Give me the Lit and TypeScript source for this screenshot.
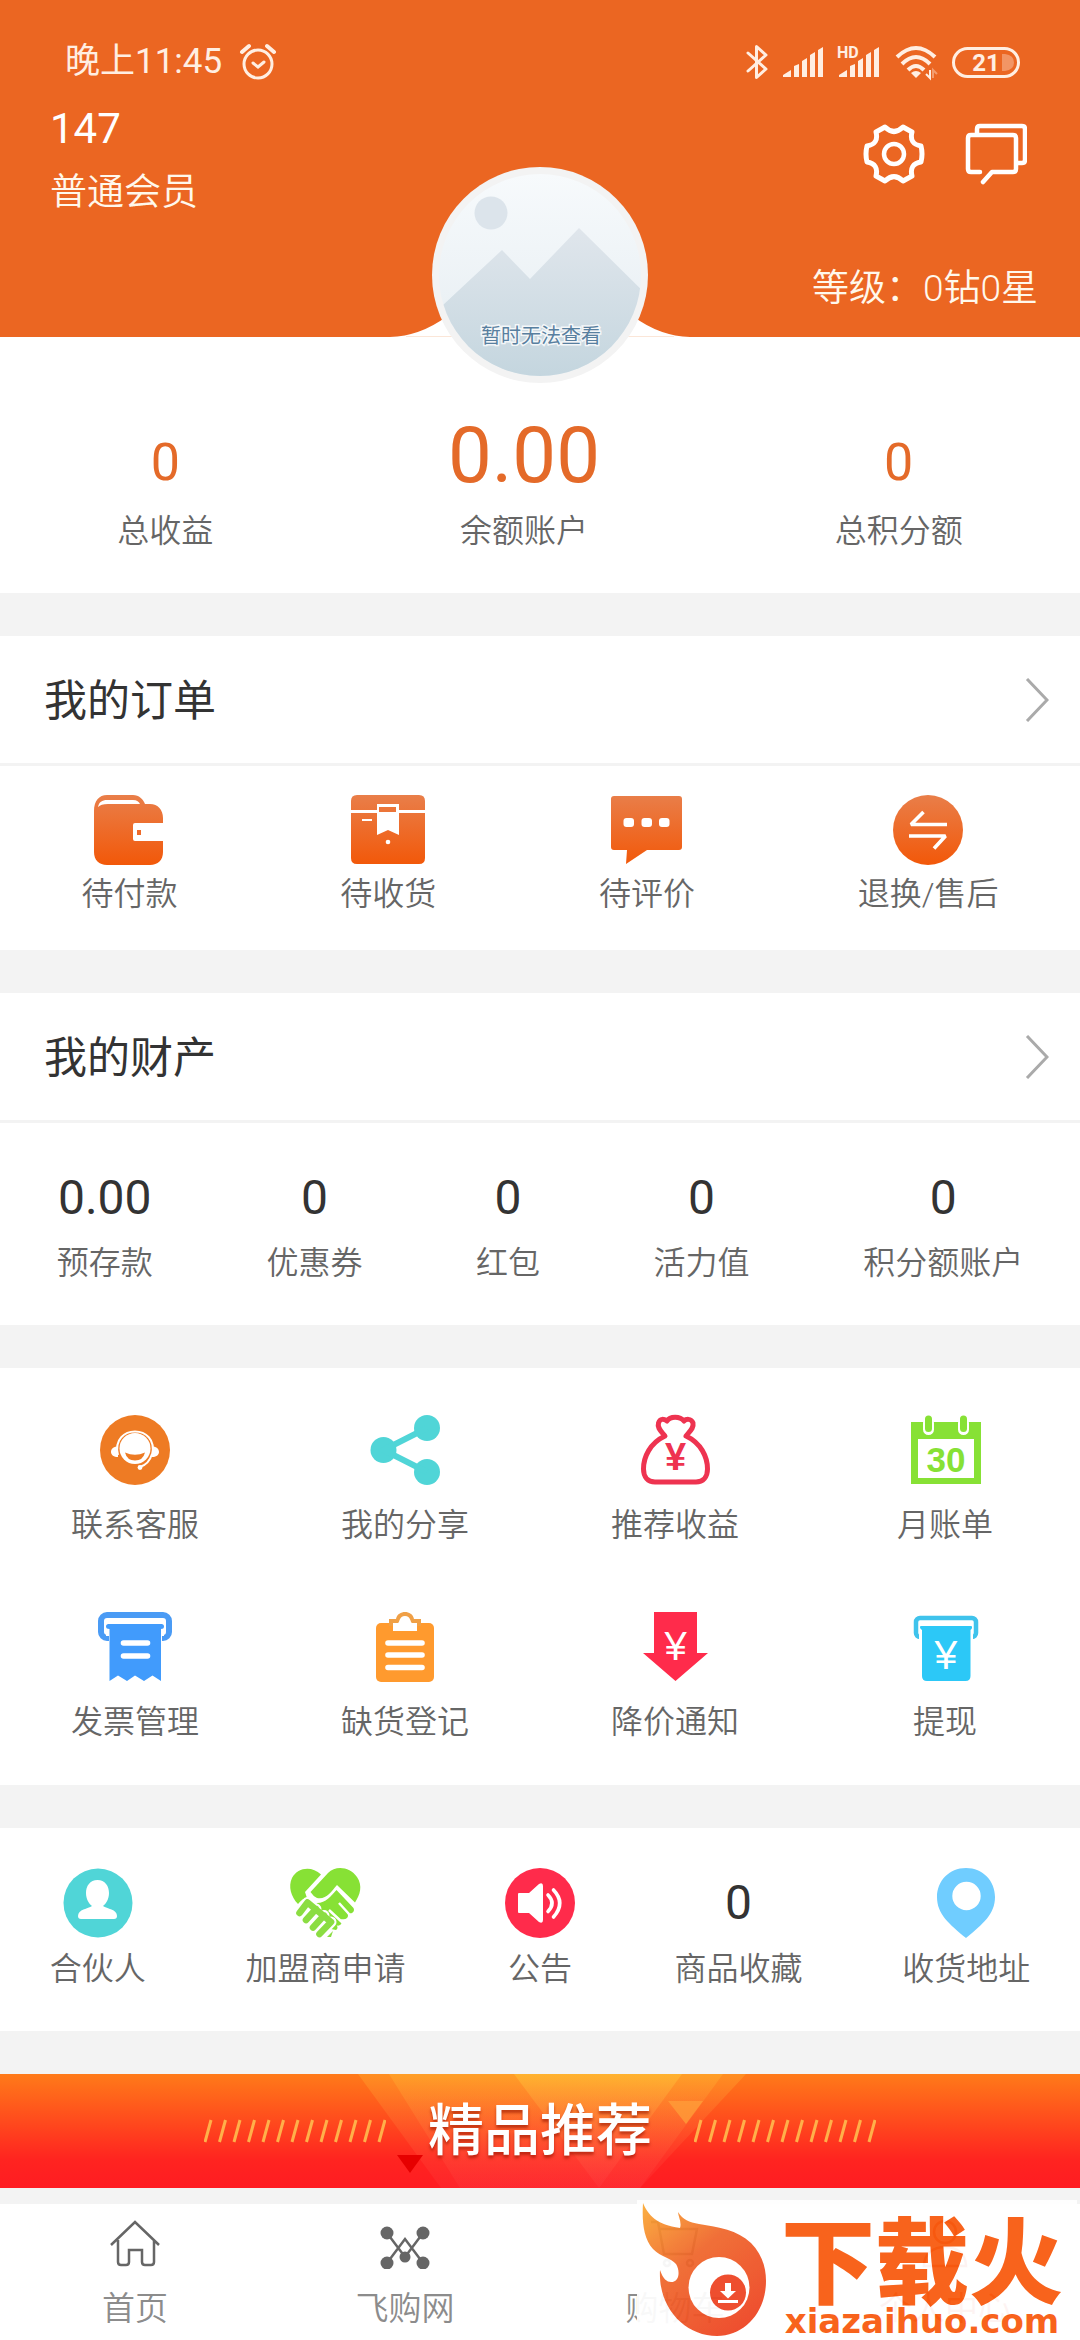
import { LitElement, html, svg, css, SVGTemplateResult } from "lit";
import { customElement, property } from "lit/decorators.js";

type Entry = { label: string; icon?: string; value?: string };

const ORDERS: Entry[] = [
  { label: "待付款", icon: "wallet" },
  { label: "待收货", icon: "parcel" },
  { label: "待评价", icon: "comment" },
  { label: "退换/售后", icon: "exchange" },
];

const ASSETS: Entry[] = [
  { label: "预存款", value: "0.00" },
  { label: "优惠券", value: "0" },
  { label: "红包", value: "0" },
  { label: "活力值", value: "0" },
  { label: "积分额账户", value: "0" },
];

const TOOLS: Entry[] = [
  { label: "联系客服", icon: "service" },
  { label: "我的分享", icon: "share" },
  { label: "推荐收益", icon: "bag" },
  { label: "月账单", icon: "calendar" },
  { label: "发票管理", icon: "receipt" },
  { label: "缺货登记", icon: "clipboard" },
  { label: "降价通知", icon: "drop" },
  { label: "提现", icon: "cash" },
];

const EXTRAS: Entry[] = [
  { label: "合伙人", icon: "partner" },
  { label: "加盟商申请", icon: "alliance" },
  { label: "公告", icon: "notice" },
  { label: "商品收藏", value: "0" },
  { label: "收货地址", icon: "pin" },
];

const warm = svg`<defs><linearGradient id="warm" gradientUnits="userSpaceOnUse" x1="0" y1="0" x2="0" y2="70">
  <stop offset="0" stop-color="#e97e49"/><stop offset="1" stop-color="#f25809"/></linearGradient></defs>`;

/* Every glyph is drawn on a 70 by 70 board; a few reach slightly past its sides. */
const ICONS: Record<string, SVGTemplateResult> = {
  wallet: svg`${warm}
    <path fill="url(#warm)" d="M0 16C0 6 5 0 13 0H39C45 0 49 4 51 9H56C64 9 69 15 69 23V28H41Q39 28 39 30V44Q39 46 41 46H69V57C69 65 64 70 56 70H13C5 70 0 65 0 57Z"/>
    <path fill="#fff" d="M4 12C5 7 8 5 13 5H39C43 5 45 7 46 9H14C9 9 6 10 4 12Z"/>
    <rect x="43" y="35" width="4" height="5" fill="#ee6a2a"/>`,
  parcel: svg`${warm}
    <path fill="url(#warm)" d="M-2 15V6Q-2 0 4 0H66Q72 0 72 6V15ZM-2 18H72V63Q72 69 66 69H4Q-2 69 -2 63Z"/>
    <path fill="#fff" d="M24 9H46V40L35 35 24 40Z"/>
    <rect x="26" y="12" width="17" height="5" fill="#ec7539"/>
    <path stroke="#fff" stroke-width="2" d="M9 25H19"/><circle cx="35" cy="47" r="2.3" fill="#fff"/>`,
  comment: svg`${warm}
    <path fill="url(#warm)" d="M2 1H67Q70 1 70 4V52Q70 55 67 55H35L14 69 15 55H2Q-1 55 -1 52V4Q-1 1 2 1Z"/>
    <g fill="#fff"><rect x="11.5" y="23" width="10.5" height="9" rx="3"/><rect x="29.5" y="23" width="10.5" height="9" rx="3"/><rect x="47" y="23" width="10.5" height="9" rx="3"/></g>`,
  exchange: svg`${warm}
    <circle cx="35" cy="35" r="35" fill="url(#warm)"/>
    <path fill="none" stroke="#fff" stroke-width="3.6" stroke-linejoin="bevel" d="M54 29.5H18L30.5 17M16 41H52.5L41 53.5"/>`,
  service: svg`<circle cx="35" cy="35" r="35" fill="#ee7b24"/>
    <circle cx="35" cy="33.5" r="15.5" fill="#fff"/>
    <g fill="none" stroke="#fff" stroke-width="2"><path d="M18 40C14 24 25 16.5 35 16.5S56 24 52 40"/><path d="M52 39C50 46 46 50 40 52"/></g>
    <path fill="#fff" d="M18 31C13 32 11 34 11 37S14 42 18 42ZM52 31C57 32 59 34 59 37S56 42 52 42Z"/>
    <circle cx="40" cy="52.5" r="2.4" fill="#fff"/>
    <path fill="#ee7b24" d="M25 37.5Q35 42 45 37.5Q43 45.5 35 45.5T25 37.5Z"/>`,
  share: svg`<g fill="#50d5d7"><circle cx="13.5" cy="35" r="13"/><circle cx="57" cy="13" r="13"/><circle cx="57" cy="57" r="13"/></g>
    <path fill="none" stroke="#50d5d7" stroke-width="6" d="M57 13 13.5 35 57 57"/>`,
  bag: svg`<path fill="none" stroke="#ee3350" stroke-width="5" stroke-linejoin="round" d="M25 21C10 28 3.5 42 3.5 54C3.5 62 8 67 15 67H56C63 67 67.5 62 67.5 54C67.5 42 61 28 46 21C50 16 54 13 53 8C51 3 46 4 44 6C40 1 30 1 27 6C24 4 20 3 18.5 8C17 13 21 16 25 21Z"/>
    <text x="35.5" y="55" text-anchor="middle" font-family="Liberation Sans" font-weight="700" font-size="38" fill="#ee3350">¥</text>`,
  calendar: svg`<path fill="#87e135" fill-rule="evenodd" d="M1 7H71V69H1ZM8 24V63H64V24Z"/>
    <g stroke-linecap="round"><path stroke="#fff" stroke-width="11" d="M18.5 8V14.5M53.5 8V14.5"/><path stroke="#87e135" stroke-width="7" d="M18.5 4V13.5M53.5 4V13.5"/></g>
    <text x="36" y="57" text-anchor="middle" font-family="Liberation Sans" font-weight="700" font-size="35" fill="#87e135">30</text>`,
  receipt: svg`<rect x="1" y="3" width="68" height="23" rx="6" fill="#fff" stroke="#4a9bf5" stroke-width="6"/>
    <path fill="#fff" d="M6 19H64V24H6ZM9 24H62V30H9Z"/>
    <path fill="#419bfc" d="M8.5 12H61.5Q64 12 64 14.5T61 17V69L52.5 63.5 44 69 35 63.5 27 69 18 63.5 9.5 69V17Q6 17 6 14.5T8.5 12Z"/>
    <path stroke="#fff" stroke-width="5.6" stroke-linecap="round" d="M23.5 31H47.5M23.5 44H47.5"/>`,
  clipboard: svg`<rect x="6" y="11" width="58" height="59" rx="5" fill="#ff9a2e"/>
    <path fill="#f0a046" d="M19 7H26C27 2 31 0 35 0S43 2 44 7H51V14H19Z"/>
    <path fill="#fff" d="M23 11H28C30 10 29 4 35 4S40 10 42 11H47V19H23Z"/>
    <path stroke="#fff" stroke-width="5.6" stroke-linecap="round" d="M18 31H52M18 43H52M18 55.5H52"/>`,
  drop: svg`<path fill="#ff2b4b" d="M14 0H57V41H68L35.5 69 3 41H14Z"/>
    <text x="35.5" y="48" text-anchor="middle" font-family="Liberation Sans" font-size="40" fill="#fff">¥</text>`,
  cash: svg`<rect x="6" y="6" width="60" height="19" rx="4" fill="#fff" stroke="#3fc3ec" stroke-width="4.5"/>
    <path fill="#fff" d="M9 20H63V30H9Z"/>
    <path fill="#2cc8f7" d="M10.5 14H61.5Q63 16 60.5 18V64Q60.5 69 55.5 69H17Q12 69 12 64V18Q9 16 10.5 14Z"/>
    <text x="36" y="57" text-anchor="middle" font-family="Liberation Sans" font-size="41" fill="#fff">¥</text>`,
  partner: svg`<circle cx="35" cy="35" r="34.5" fill="#50d5d7"/>
    <path fill="#fff" d="M34.5 12C42 12 46 18 46 25C46 31 43 36 40 38C44 41 54 41 54 48Q54 51 51 51H18Q15 51 15 48C15 41 25 41 29 38C26 36 23 31 23 25C23 18 27 12 34.5 12Z"/>`,
  alliance: svg`<g fill="#87e135">
      <path d="M31 6.5C22-2 8-1 2 10C-2 18 1 29 8 36C11 32 14 30 17 30L15 24Z"/>
      <path d="M20.5 24 38 5C46-3 60-1 67 9C73 18 70 27 65 34.5L47 17C41 24 36 32 27 30Q23 28 20.5 24Z"/>
      <path d="M27 35C36 35 41 28 46.5 22L63.5 40Q65 43 62 45Q60 46 57 44 59 48 57 50T51 51Q53 55 50 57T46 56Q49 60 46 62L41 61 25 41Z"/>
    </g>
    <path stroke="#fff" stroke-width="2.5" d="M49 35 59 46M39 42 53 55"/>
    <g fill="none" stroke-linecap="round"><path stroke="#fff" stroke-width="11" d="M17.5 34.5 9.5 45M26 41 16 52M34 47.5 23 59.5M41 54 29.5 66"/>
    <path stroke="#8bdd42" stroke-width="6.6" d="M17.5 34.5 9.5 45M26 41 16 52M34 47.5 23 59.5M41 54 29.5 66M17.5 34.5 41 54"/></g>
    <path fill="#8bdd42" d="M43 63 41 69H37Z"/>`,
  notice: svg`<circle cx="35" cy="35" r="35" fill="#ff2b4b"/>
    <path fill="#fff" d="M14 25H24L34 16Q38 14 38 18V52Q38 56 34 54L24 45H14Q13 45 13 44V26Q13 25 14 25Z"/>
    <path fill="none" stroke="#fff" stroke-width="3.6" stroke-linecap="round" d="M43 27Q51 35 43 43.5M48.5 22Q61 35 48.5 49"/>`,
  pin: svg`<path fill="#70cdff" fill-rule="evenodd" d="M35 0C52 0 64 13 64 29C64 46 52 56 35 70C18 56 6 46 6 29C6 13 18 0 35 0ZM35.5 13.8A14.2 14.2 0 1 0 35.5 42.2A14.2 14.2 0 1 0 35.5 13.8Z"/>`,
};

const TABS: { label: string; art: SVGTemplateResult; current?: boolean }[] = [
  {
    label: "首页",
    art: svg`<path d="M1 26 25 3 49 26M8 21V43Q8 46 11 46H16Q19 46 19 43V31H32V43Q32 46 35 46H41Q44 46 44 43V21"/>`,
  },
  {
    label: "飞购网",
    art: svg`<path d="M7 14 25 38 43 14M7 44 25 20 43 44"/><g fill="currentColor" stroke="none"><circle cx="7" cy="14" r="6.5"/><circle cx="43" cy="14" r="6.5"/><circle cx="7" cy="44" r="6.5"/><circle cx="43" cy="44" r="6.5"/><circle cx="25" cy="38" r="5.5"/></g>`,
  },
  {
    label: "购物车",
    art: svg`<path d="M1 3H8L14 35H42L47 10H10"/><circle cx="17" cy="44" r="3"/><circle cx="40" cy="44" r="3"/>`,
  },
  {
    label: "个人中心",
    current: true,
    art: svg`<circle cx="25" cy="13" r="11"/><path d="M4 47C4 34 14 28 25 28S46 34 46 47Z"/>`,
  },
];

const entryStyles = css`
  a {
    color: inherit;
    text-decoration: none;
  }
  .entry {
    display: flex;
    flex-direction: column;
    align-items: center;
    white-space: nowrap;
  }
  .icon {
    display: block;
    width: 70px;
    height: 70px;
    overflow: visible;
  }
  .value {
    color: #333;
    font-size: 48px;
    line-height: 60px;
  }
  .label {
    color: #666;
    font-size: 32px;
    font-weight: 350;
    line-height: 42px;
  }
`;

@customElement("entry-row")
class EntryRow extends LitElement {
  @property({ attribute: false }) entries: Entry[] = [];
  @property({ reflect: true }) kind = "orders";

  static styles = [
    entryStyles,
    css`
      :host {
        display: block;
      }
      .row {
        display: flex;
        justify-content: space-around;
      }
      .row.orders {
        padding: 29px 0 35px;
      }
      .row.orders .entry {
        gap: 8px;
      }
      .row.assets {
        padding: 45px 0 41px;
      }
      .row.assets .entry {
        gap: 14px;
      }
      .row.tools {
        display: grid;
        grid-template-columns: repeat(4, 1fr);
        row-gap: 66px;
        padding: 47px 0 42px;
      }
      .row.tools .entry {
        gap: 19px;
      }
      .row.extras {
        padding: 40px 0 41px;
      }
      .row.extras .entry {
        gap: 10px;
      }
      .row.extras .value {
        line-height: 70px;
      }
    `,
  ];

  render() {
    return html`<div class="row ${this.kind}">
      ${this.entries.map(
        (e) => html`<a class="entry" href="#">
          ${e.icon
            ? html`<svg class="icon" viewBox="0 0 70 70" aria-hidden="true">${ICONS[e.icon]}</svg>`
            : html`<span class="value">${e.value}</span>`}
          <span class="label">${e.label}</span>
        </a>`
      )}
    </div>`;
  }
}

@customElement("status-bar")
class StatusBar extends LitElement {
  static styles = css`
    :host {
      display: flex;
      align-items: center;
      justify-content: space-between;
      padding: 44px 60px 0 65px;
      color: #ffeee2;
    }
    .side {
      display: flex;
      align-items: center;
      gap: 15px;
      height: 36px;
    }
    .side.clock {
      gap: 18px;
    }
    .time {
      font-size: 35px;
      line-height: 38px;
    }
    svg {
      display: block;
      overflow: visible;
    }
  `;

  private bars(lead: SVGTemplateResult | string = "") {
    return html`<svg width="41" height="32" viewBox="0 0 41 32" fill="currentColor" aria-hidden="true">
      ${lead}
      <path d="M0 31V29L8 24V31ZM11 31V20L16 18V31ZM19 31V15L24 12V31ZM27 31V9L32 6V31ZM35 31V4L40 1V31Z" />
    </svg>`;
  }

  render() {
    return html`
      <div class="side clock">
        <span class="time">晚上11:45</span>
        <svg width="36" height="36" viewBox="0 0 36 36" fill="none" stroke="currentColor" stroke-width="3" stroke-linecap="round" aria-hidden="true">
          <circle cx="18" cy="20" r="14" />
          <path d="M13 19 18 23 24 18" />
          <path stroke-width="4" d="M2 8 9 2M27 2 34 8" />
        </svg>
      </div>
      <div class="side">
        <svg width="22" height="36" viewBox="0 0 22 36" fill="none" stroke="currentColor" stroke-width="3" stroke-linejoin="round" stroke-linecap="round" aria-hidden="true">
          <path d="M2 9 20 25 10.5 33.5V2.5L20 11 2 27" />
        </svg>
        ${this.bars()}
        ${this.bars(svg`<text x="-2" y="12" font-family="Roboto" font-weight="700" font-size="16">HD</text>`)}
        <svg width="42" height="34" viewBox="0 0 42 34" fill="none" stroke="currentColor" stroke-width="4" aria-hidden="true">
          <path d="M2 12Q21-6 40 12M7 19Q21 5 35 19M13 25Q21 17 29 25" />
          <path fill="currentColor" stroke="none" d="M16 28Q21 24 26 28L21 33Z" />
          <path stroke-width="2" d="M35 25V33L31 29" />
          <path stroke-width="2" opacity=".4" d="M38 33V25L42 29" />
        </svg>
        <svg width="68" height="32" viewBox="0 0 68 32" aria-hidden="true">
          <rect x="1.5" y="2.5" width="65" height="28" rx="14" fill="none" stroke="currentColor" stroke-width="3" />
          <path fill="currentColor" opacity=".35" d="M50 8H53Q62 9 62 16.5T53 25H50Z" />
          <text x="34" y="25" text-anchor="middle" font-family="Roboto" font-weight="700" font-size="24" fill="currentColor">21</text>
        </svg>
      </div>
    `;
  }
}

@customElement("site-badge")
class SiteBadge extends LitElement {
  static styles = css`
    :host {
      display: flex;
      background: #fff;
      opacity: 0.94;
      color: #f85a0e;
    }
    .flame {
      flex: none;
      width: 130px;
      height: 141px;
    }
    .words {
      display: flex;
      flex-direction: column;
      flex: 1;
      align-items: center;
      padding-top: 20px;
      white-space: nowrap;
    }
    .name {
      font-size: 94px;
      font-weight: 900;
      line-height: 91px;
    }
    .site {
      font-family: "DejaVu Sans", sans-serif;
      font-size: 34px;
      font-weight: 700;
      line-height: 20px;
    }
  `;

  render() {
    return html`
      <svg class="flame" viewBox="0 0 130 141" aria-hidden="true">
        <defs>
          <linearGradient id="fire" x1="0" y1="0" x2=".75" y2="1">
            <stop offset="0" stop-color="#fbab36" />
            <stop offset=".45" stop-color="#f0672c" />
            <stop offset="1" stop-color="#ee4423" />
          </linearGradient>
        </defs>
        <path fill="url(#fire)" d="M6 3C11 15 20 25 43 28C45 22 41 16 41 12C46 20 52 22 62 24C82 27 100 30 114 43C124 53 129 66 129 81C129 112 108 136 80 136C48 136 21 108 23 70C26 79 30 82 34 82C43 82 43 70 39 64C34 58 24 57 16 49C6 38 5 20 6 3Z" />
        <circle cx="82" cy="87.5" r="30.5" fill="#fff" />
        <circle cx="91" cy="92.5" r="18" fill="#ee4423" />
        <path fill="#fff" d="M88 83H94V91H99L91 98.5 83 91H88ZM81 100H101V103H81Z" />
      </svg>
      <div class="words">
        <span class="name">下载火</span>
        <span class="site">xiazaihuo.com</span>
      </div>
    `;
  }
}

@customElement("app-root")
class AppRoot extends LitElement {
  static styles = [
    entryStyles,
    css`
      :host {
        display: flex;
        flex-direction: column;
        position: relative;
        min-height: 100vh;
        overflow: hidden;
        background: #f3f3f3;
        color: #333;
        font-family: Roboto, "Noto Sans CJK SC", sans-serif;
      }
      h1,
      h2,
      p {
        margin: 0;
        font-weight: 400;
      }
      button {
        padding: 0;
        border: 0;
        background: none;
        color: inherit;
        cursor: pointer;
      }
      .hero {
        position: relative;
        background: #eb6622;
        color: #fff8ec;
      }
      .profile {
        display: flex;
        justify-content: space-between;
        padding: 24px 53px 0 50px;
      }
      .who {
        display: flex;
        flex-direction: column;
        gap: 14px;
      }
      .name {
        color: #fff;
        font-size: 42px;
        line-height: 50px;
      }
      .tier,
      .level {
        font-size: 37px;
        font-weight: 350;
        line-height: 50px;
      }
      .level {
        padding: 46px 42px 23px;
        text-align: right;
      }
      .actions {
        display: flex;
        gap: 40px;
        padding-top: 19px;
        align-items: flex-start;
      }
      .actions svg {
        display: block;
        width: 62px;
        height: 62px;
      }
      .portrait {
        position: absolute;
        left: 0;
        right: 0;
        bottom: -46px;
        width: 304px;
        height: 216px;
        margin: 0 auto;
      }
      .panel {
        margin-bottom: 43px;
        background: #fff;
      }
      .totals {
        display: flex;
        justify-content: space-around;
        align-items: flex-end;
        padding: 72px 0 41px;
      }
      .totals .entry {
        gap: 7px;
      }
      .sum {
        color: #e46a29;
        font-size: 52px;
        line-height: 80px;
      }
      .sum.major {
        font-size: 78px;
        line-height: 94px;
      }
      .head {
        display: flex;
        align-items: center;
        justify-content: space-between;
        padding: 0 31px 0 44px;
        border-bottom: 3px solid #f3f3f3;
      }
      .head h2 {
        padding-top: 3px;
        font-size: 43px;
        line-height: 124px;
      }
      .head svg {
        width: 24px;
        height: 44px;
      }
      .banner {
        display: grid;
        height: 114px;
        margin-bottom: 16px;
      }
      .banner > * {
        grid-area: 1 / 1;
      }
      .backdrop {
        width: 100%;
        height: 114px;
      }
      .pitch {
        display: flex;
        align-items: center;
        justify-content: center;
        gap: 42px;
        z-index: 1;
      }
      .pitch h2 {
        color: #fff;
        font-size: 56px;
        font-weight: 500;
        line-height: 70px;
        text-shadow: 0 3px 3px rgba(150, 20, 0, 0.6);
      }
      .ticks {
        width: 182px;
        height: 24px;
      }
      .tabs {
        display: grid;
        grid-template-columns: repeat(4, 1fr);
        margin-top: auto;
        padding: 15px 0 11px;
        background: #fff;
      }
      .tab {
        display: flex;
        flex-direction: column;
        align-items: center;
        gap: 19px;
        color: #666;
      }
      .tab svg {
        width: 50px;
        height: 50px;
      }
      .tab span {
        color: #8c8c8c;
        font-size: 33px;
        font-weight: 350;
        line-height: 42px;
      }
      .tab.current,
      .tab.current span {
        color: #eb4022;
      }
      .badge {
        position: absolute;
        right: 3px;
        bottom: 0;
        width: 440px;
        height: 141px;
      }
    `,
  ];

  private ticks() {
    return html`<svg class="ticks" viewBox="0 0 182 24" stroke="#ffb04a" stroke-width="3" aria-hidden="true">
      ${Array.from({ length: 13 }, (_, i) => svg`<path d="M${1 + i * 14.5} 23L${7 + i * 14.5} 1"/>`)}
    </svg>`;
  }

  private head(title: string) {
    return html`<a class="head" href="#">
      <h2>${title}</h2>
      <svg viewBox="0 0 24 44" fill="none" stroke="#aaa" stroke-width="3" aria-hidden="true"><path d="M2 1 22 22 2 43" /></svg>
    </a>`;
  }

  private portrait() {
    return html`<svg class="portrait" viewBox="0 0 304 216" role="img" aria-label="头像">
      <defs>
        <linearGradient id="sky" x1="0" y1="0" x2="0" y2="1"><stop offset="0" stop-color="#f7fafc" /><stop offset="1" stop-color="#e4ecf1" /></linearGradient>
        <linearGradient id="hill" x1="0" y1="0" x2="0" y2="1"><stop offset="0" stop-color="#e0e6ec" /><stop offset="1" stop-color="#c3d5de" /></linearGradient>
        <clipPath id="disc"><circle cx="152" cy="108" r="101" /></clipPath>
      </defs>
      <path fill="#fff" d="M2 170Q32 169 58 150H246Q272 169 302 170V171H2Z" />
      <path stroke="#fbe6d8" d="M18 169.5H286" />
      <circle cx="152" cy="108" r="108" fill="#f3f3f3" />
      <g clip-path="url(#disc)">
        <path fill="url(#sky)" d="M50 7H254V209H50Z" />
        <circle cx="103" cy="46" r="16.5" fill="#dce4eb" />
        <path fill="url(#hill)" d="M40 152 114 83 142 112 191 61 262 131V216H40Z" />
      </g>
      <text x="153" y="176" text-anchor="middle" font-size="20" fill="#587f9f" stroke="#fff" stroke-opacity=".8" stroke-width="3" paint-order="stroke">暂时无法查看</text>
    </svg>`;
  }

  render() {
    return html`
      <header class="hero">
        <status-bar></status-bar>
        <div class="profile">
          <div class="who">
            <h1 class="name">147</h1>
            <p class="tier">普通会员</p>
          </div>
          <div class="actions">
            <button type="button" aria-label="设置">
              <svg viewBox="0 0 62 62" fill="none" stroke="#fff" stroke-width="5" stroke-linejoin="round">
                <path d="M22 4 Q31 13 40 4L49 9Q46 21 58 23Q60 31 58 39Q46 41 49 53L40 58Q31 49 22 58L13 53Q16 41 4 39Q2 31 4 23Q16 21 13 9Z" />
                <circle cx="31" cy="31" r="10" stroke-width="4.5" />
              </svg>
            </button>
            <button type="button" aria-label="消息">
              <svg viewBox="0 0 62 62" fill="none" stroke="#fff" stroke-width="4.5" stroke-linejoin="round" stroke-linecap="round">
                <path d="M15 49H6Q3 49 3 46V15Q3 12 6 12H48Q51 12 51 15V46Q51 49 48 49H27L18 59" />
                <path d="M12 11V6Q12 3 15 3H57Q60 3 60 6V37Q60 40 57 40H53" />
              </svg>
            </button>
          </div>
        </div>
        <p class="level">等级：0钻0星</p>
        ${this.portrait()}
      </header>

      <section class="panel totals">
        <a class="entry" href="#"><span class="sum">0</span><span class="label">总收益</span></a>
        <a class="entry" href="#"><span class="sum major">0.00</span><span class="label">余额账户</span></a>
        <a class="entry" href="#"><span class="sum">0</span><span class="label">总积分额</span></a>
      </section>

      <section class="panel">
        ${this.head("我的订单")}
        <entry-row kind="orders" .entries=${ORDERS}></entry-row>
      </section>

      <section class="panel">
        ${this.head("我的财产")}
        <entry-row kind="assets" .entries=${ASSETS}></entry-row>
      </section>

      <section class="panel"><entry-row kind="tools" .entries=${TOOLS}></entry-row></section>
      <section class="panel"><entry-row kind="extras" .entries=${EXTRAS}></entry-row></section>

      <section class="banner">
        <svg class="backdrop" viewBox="0 0 1080 114" preserveAspectRatio="xMidYMid slice" aria-hidden="true">
          <defs>
            <linearGradient id="blaze" x1="0" y1="0" x2="0" y2="1"><stop offset="0" stop-color="#ff7a19" /><stop offset=".75" stop-color="#ff2420" /><stop offset="1" stop-color="#ff1c22" /></linearGradient>
            <linearGradient id="ray" x1="0" y1="0" x2="0" y2="1"><stop offset="0" stop-color="#ffd23a" stop-opacity=".24" /><stop offset="1" stop-color="#ff5058" stop-opacity=".14" /></linearGradient>
            <linearGradient id="beam" x1="0" y1="0" x2="0" y2="1"><stop offset="0" stop-color="#ffd03a" stop-opacity=".4" /><stop offset="1" stop-color="#ff5058" stop-opacity=".15" /></linearGradient>
          </defs>
          <rect x="-1000" width="3080" height="114" fill="url(#blaze)" />
          <path fill="url(#ray)" d="M358 0H746L640 114H441Z" />
          <path fill="url(#ray)" d="M389 0H723L640 114H460Z" />
          <path fill="url(#beam)" d="M514 0H682L599 114Z" />
          <path fill="#ff9f3a" opacity=".75" d="M668 27H703L686 50Z" />
          <path fill="#e60000" d="M397 81H423L410 99Z" />
        </svg>
        <div class="pitch">${this.ticks()}<h2>精品推荐</h2>${this.ticks()}</div>
      </section>

      <nav class="tabs">
        ${TABS.map(
          (t) => html`<a class="tab ${t.current ? "current" : ""}" href="#">
            <svg viewBox="0 0 50 50" fill="none" stroke="currentColor" stroke-width="2.5" aria-hidden="true">${t.art}</svg>
            <span>${t.label}</span>
          </a>`
        )}
      </nav>
      <site-badge class="badge"></site-badge>
    `;
  }
}
